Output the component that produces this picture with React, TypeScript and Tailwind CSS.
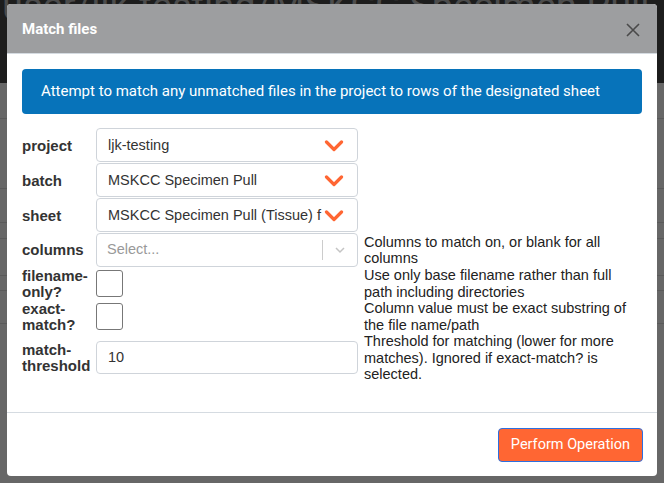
import React from 'react';

const OrangeChevron = () => (
  <svg width="20" height="12" viewBox="0 0 20 12" className="shrink-0">
    <polyline points="2.5,2 10,9.5 17.5,2" fill="none" stroke="#ff6633" strokeWidth="3.2" strokeLinecap="round" strokeLinejoin="round" />
  </svg>
);

const SelectBox = ({ value }: { value: string }) => (
  <div className="flex items-center h-[34px] w-[262px] border border-[#cfd4da] rounded-[4px] bg-white pl-[11px] pr-[13px] pt-[2px]">
    <span className="flex-1 overflow-hidden whitespace-nowrap text-[14.5px] text-[#333]">{value}</span>
    <OrangeChevron />
  </div>
);

const rows = [
  { label: 'project', value: 'ljk-testing' },
  { label: 'batch', value: 'MSKCC Specimen Pull' },
  { label: 'sheet', value: 'MSKCC Specimen Pull (Tissue) f' },
];

export default function App() {
  return (
    <div className="relative w-[664px] h-[483px] overflow-hidden bg-[#676767]" style={{ fontFamily: '"Liberation Sans", Arial, sans-serif' }}>
      {/* page behind the overlay */}
      <div className="absolute left-0 top-0 w-full h-[83px] bg-[#1d1d1d]">
        <div className="absolute left-[2px] top-[-22px] text-[38px] text-[#4c4c4c] whitespace-nowrap" style={{ fontFamily: 'Roboto, sans-serif' }}>
          user/ljk-testing/MSKCC Specimen Pull
        </div>
      </div>
      <div className="absolute left-0 top-[118px] w-full h-px bg-[#5a5a5a]" />
      <div className="absolute left-0 top-[188px] w-full h-px bg-[#5a5a5a]" />
      <div className="absolute left-0 top-[222px] w-full h-px bg-[#5a5a5a]" />
      <div className="absolute left-0 top-[238px] w-full h-px bg-[#5a5a5a]" />
      <div className="absolute left-0 top-[275px] w-full h-px bg-[#5a5a5a]" />
      <div className="absolute left-0 top-[290px] w-full h-px bg-[#5a5a5a]" />
      <div className="absolute left-0 top-[323px] w-full h-px bg-[#5a5a5a]" />

      {/* modal */}
      <div className="absolute left-[7px] top-[4px] w-[650px] h-[472px] bg-white rounded-[4px] overflow-hidden flex flex-col">
        <div className="h-[50px] shrink-0 bg-[#9d9ea0] border-b border-[#d5dbe1] flex items-center justify-between pl-[15px] pr-[17px] pt-[2px]" style={{ fontFamily: 'Roboto, sans-serif' }}>
          <span className="text-white font-bold text-[15px]">Match files</span>
          <svg width="14" height="14" viewBox="0 0 14 14">
            <path d="M1 1 L13 13 M13 1 L1 13" stroke="#4a4a4a" strokeWidth="1.6" />
          </svg>
        </div>

        <div className="flex-1 px-[15px] pt-[15px]">
          <div className="h-[45px] rounded-[4px] bg-[#0773ba] flex items-center pl-[19px] text-white text-[15px]" style={{ fontFamily: 'Roboto, sans-serif' }}>
            Attempt to match any unmatched files in the project to rows of the designated sheet
          </div>

          <div className="mt-[14px] grid grid-cols-[74px_268px_1fr] items-center text-[14px] text-[#333]">
            {rows.map((r) => (
              <React.Fragment key={r.label}>
                <div className="font-bold text-[15px] leading-[16px]">{r.label}</div>
                <div className="pb-px">
                  <SelectBox value={r.value} />
                </div>
                <div />
              </React.Fragment>
            ))}

            <div className="font-bold text-[15px] leading-[16px]">columns</div>
            <div className="flex items-center h-[34px] w-[262px] border border-[#cfd4da] rounded-[4px] bg-white pl-[10px]">
              <span className="flex-1 text-[14.5px] text-[#999]">Select...</span>
              <div className="w-px h-[20px] bg-[#ccc]" />
              <div className="w-[34px] flex justify-center">
                <svg width="12" height="8" viewBox="0 0 12 8">
                  <polyline points="2,2 6,6 10,2" fill="none" stroke="#c4c4c4" strokeWidth="1.5" />
                </svg>
              </div>
            </div>
            <div className="leading-[16.5px] text-[14.5px] text-[#222]">Columns to match on, or blank for all columns</div>

            <div className="font-bold text-[15px] leading-[16px]">filename-<br />only?</div>
            <div className="w-[27px] h-[27px] border border-[#777] rounded-[3px]" />
            <div className="leading-[16.5px] text-[14.5px] text-[#222]">Use only base filename rather than full path including directories</div>

            <div className="font-bold text-[15px] leading-[16px]">exact-<br />match?</div>
            <div className="w-[27px] h-[27px] border border-[#777] rounded-[3px]" />
            <div className="leading-[16.5px] text-[14.5px] text-[#222]">Column value must be exact substring of the file name/path</div>

            <div className="font-bold text-[15px] leading-[16px]">match-<br />threshold</div>
            <div className="flex items-center h-[33px] w-[262px] border border-[#cfd4da] rounded-[4px] bg-white pl-[11px] text-[14.5px] text-[#333]">10</div>
            <div className="leading-[16.5px] text-[14.5px] text-[#222]">Threshold for matching (lower for more matches). Ignored if exact-match? is selected.</div>
          </div>
        </div>

        <div className="h-[64px] shrink-0 border-t border-[#d5dbe1] flex items-center justify-end pr-[14px]">
          <button className="h-[34px] px-[12px] rounded-[4px] bg-[#ff6633] border border-[#2d6fe0] text-white text-[14.5px]" style={{ fontFamily: 'Roboto, sans-serif' }}>
            Perform Operation
          </button>
        </div>
      </div>
    </div>
  );
}
